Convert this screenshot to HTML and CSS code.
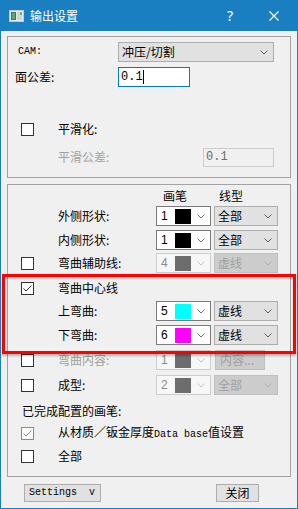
FILE: index.html
```html
<!DOCTYPE html>
<html>
<head>
<meta charset="utf-8">
<title>输出设置</title>
<link rel="stylesheet" href="styles.css">
</head>
<body>
<div class="window">
  <div class="titlebar">
    <svg class="app-icon" width="15" height="12" viewBox="0 0 15 12">
      <rect x="0.5" y="0.5" width="14" height="11" fill="#e8e8e8" stroke="#c8c8c8"/>
      <rect x="2" y="2" width="5" height="8" fill="#3d7a62"/>
      <rect x="3" y="3" width="3" height="6" fill="#5fa07e"/>
      <rect x="8" y="2" width="5" height="8" fill="#cfd6d2"/>
      <rect x="11" y="2" width="2" height="3" fill="#6fb08a"/>
    </svg>
    <span class="title">输出设置</span>
    <span class="help">?</span>
    <svg class="close" width="10" height="10" viewBox="0 0 10 10"><path d="M0.5 0.5L9.5 9.5M9.5 0.5L0.5 9.5" stroke="#fff" stroke-width="1.1" fill="none"/></svg>
  </div>

  <div class="client">
    <div class="group g1">
      <div class="row r-cam">
        <span class="lcell cam">CAM:</span>
        <div class="combo cam-combo"><span class="ctext">冲压/切割</span><svg class="chev" width="8" height="5" viewBox="0 0 8 5"><path d="M0.5 0.5L4 4L7.5 0.5" fill="none" stroke="currentColor"/></svg></div>
      </div>
      <div class="row r-tol">
        <span class="lcell tol">面公差:</span>
        <div class="edit focus"><span class="num">0.1</span><span class="caret"></span></div>
      </div>
      <div class="row r-smooth">
        <span class="cb"></span>
        <span class="clabel">平滑化:</span>
      </div>
      <div class="row r-stol">
        <span class="slabel dis">平滑公差:</span>
        <div class="edit disabled"><span class="num">0.1</span></div>
      </div>
    </div>

    <div class="group g2">
      <div class="row hdr">
        <span class="h-pen">画笔</span>
        <span class="h-line">线型</span>
      </div>

      <div class="row m1">
        <span class="slot"></span>
        <span class="lbl">外侧形状:</span>
        <div class="pen"><span class="pnum">1</span><span class="sw" style="background:#000000"></span><svg class="chev" width="8" height="5" viewBox="0 0 8 5"><path d="M0.5 0.5L4 4L7.5 0.5" fill="none" stroke="currentColor"/></svg></div>
        <div class="combo line"><span class="ctext">全部</span><svg class="chev" width="8" height="5" viewBox="0 0 8 5"><path d="M0.5 0.5L4 4L7.5 0.5" fill="none" stroke="currentColor"/></svg></div>
      </div>

      <div class="row m2">
        <span class="slot"></span>
        <span class="lbl">内侧形状:</span>
        <div class="pen"><span class="pnum">1</span><span class="sw" style="background:#000000"></span><svg class="chev" width="8" height="5" viewBox="0 0 8 5"><path d="M0.5 0.5L4 4L7.5 0.5" fill="none" stroke="currentColor"/></svg></div>
        <div class="combo line"><span class="ctext">全部</span><svg class="chev" width="8" height="5" viewBox="0 0 8 5"><path d="M0.5 0.5L4 4L7.5 0.5" fill="none" stroke="currentColor"/></svg></div>
      </div>

      <div class="row m3">
        <span class="slot"><span class="cb"></span></span>
        <span class="lbl">弯曲辅助线:</span>
        <div class="pen off"><span class="pnum">4</span><span class="sw" style="background:#6d6d6d"></span><svg class="chev" width="8" height="5" viewBox="0 0 8 5"><path d="M0.5 0.5L4 4L7.5 0.5" fill="none" stroke="currentColor"/></svg></div>
        <div class="combo line off"><span class="ctext">虚线</span><svg class="chev" width="8" height="5" viewBox="0 0 8 5"><path d="M0.5 0.5L4 4L7.5 0.5" fill="none" stroke="currentColor"/></svg></div>
      </div>

      <div class="row m4">
        <span class="slot"><span class="cb checked"><svg width="11" height="11" viewBox="0 0 11 11"><path d="M1.5 5.5L4 8L9.5 2.5" fill="none" stroke="#333" stroke-width="1"/></svg></span></span>
        <span class="lbl">弯曲中心线</span>
      </div>

      <div class="row m5">
        <span class="slot"></span>
        <span class="lbl">上弯曲:</span>
        <div class="pen"><span class="pnum">5</span><span class="sw" style="background:#00ffff"></span><svg class="chev" width="8" height="5" viewBox="0 0 8 5"><path d="M0.5 0.5L4 4L7.5 0.5" fill="none" stroke="currentColor"/></svg></div>
        <div class="combo line"><span class="ctext">虚线</span><svg class="chev" width="8" height="5" viewBox="0 0 8 5"><path d="M0.5 0.5L4 4L7.5 0.5" fill="none" stroke="currentColor"/></svg></div>
      </div>

      <div class="row m6">
        <span class="slot"></span>
        <span class="lbl">下弯曲:</span>
        <div class="pen"><span class="pnum">6</span><span class="sw" style="background:#ff00ff"></span><svg class="chev" width="8" height="5" viewBox="0 0 8 5"><path d="M0.5 0.5L4 4L7.5 0.5" fill="none" stroke="currentColor"/></svg></div>
        <div class="combo line"><span class="ctext">虚线</span><svg class="chev" width="8" height="5" viewBox="0 0 8 5"><path d="M0.5 0.5L4 4L7.5 0.5" fill="none" stroke="currentColor"/></svg></div>
      </div>

      <div class="row m7">
        <span class="slot"><span class="cb"></span></span>
        <span class="lbl dis">弯曲内容:</span>
        <div class="pen off"><span class="pnum">1</span><span class="sw" style="background:#6d6d6d"></span><svg class="chev" width="8" height="5" viewBox="0 0 8 5"><path d="M0.5 0.5L4 4L7.5 0.5" fill="none" stroke="currentColor"/></svg></div>
        <div class="btn-content">内容...</div>
      </div>

      <div class="row m8">
        <span class="slot"><span class="cb"></span></span>
        <span class="lbl">成型:</span>
        <div class="pen off"><span class="pnum">2</span><span class="sw" style="background:#6d6d6d"></span><svg class="chev" width="8" height="5" viewBox="0 0 8 5"><path d="M0.5 0.5L4 4L7.5 0.5" fill="none" stroke="currentColor"/></svg></div>
        <div class="combo line off"><span class="ctext">全部</span><svg class="chev" width="8" height="5" viewBox="0 0 8 5"><path d="M0.5 0.5L4 4L7.5 0.5" fill="none" stroke="currentColor"/></svg></div>
      </div>

      <div class="row m9">
        <span class="done">已完成配置的画笔:</span>
      </div>

      <div class="row m10">
        <span class="slot"><span class="cb checked grey"><svg width="11" height="11" viewBox="0 0 11 11"><path d="M1.5 5.5L4 8L9.5 2.5" fill="none" stroke="#8a8a8a" stroke-width="1"/></svg></span></span>
        <span class="lbl wide">从材质／钣金厚度<span class="lat">Data base</span>值设置</span>
      </div>

      <div class="row m11">
        <span class="slot"><span class="cb"></span></span>
        <span class="lbl">全部</span>
      </div>
    </div>

    <div class="buttons">
      <div class="btn settings">Settings  v</div>
      <div class="btn close-btn">关闭</div>
    </div>
  </div>

  <div class="annot"></div>
</div>
</body>
</html>
```

FILE: styles.css
```css
html, body {
  margin: 0;
  padding: 0;
}
body {
  width: 298px;
  height: 509px;
  overflow: hidden;
  font-family: "Noto Sans CJK SC", "Noto Sans", sans-serif;
  font-size: 12px;
  color: #000;
  background: #f0f0f0;
}
.window {
  position: relative;
  width: 298px;
  height: 509px;
}
.titlebar {
  height: 31px;
  background: #1a7fc1;
  display: flex;
  align-items: center;
  color: #fff;
}
.app-icon {
  margin-left: 9px;
  flex: none;
}
.title {
  margin-left: 6px;
  flex: 1;
  font-size: 12px;
  line-height: 16px;
}
.help {
  font-family: "Noto Sans", sans-serif;
  font-size: 14px;
  line-height: 16px;
  margin-right: 36px;
}
.close {
  margin-right: 19px;
  flex: none;
}
.client {
  height: 478px;
  box-sizing: border-box;
  border: 1px solid #1a7fc1;
  border-top: none;
  padding-top: 5px;
  padding-left: 6px;
}
.group {
  width: 284px;
  box-sizing: border-box;
  border: 1px solid #a3a3a3;
  display: flex;
  flex-direction: column;
}
.g1 { height: 142px; }
.g2 { height: 293px; margin-top: 6px; }

.row {
  display: flex;
  align-items: center;
  height: 20px;
  flex: none;
  line-height: 20px;
  white-space: nowrap;
}

/* group 1 */
.r-cam { margin-top: 5px; }
.r-tol { margin-top: 5px; }
.r-smooth { margin-top: 32px; }
.r-stol { margin-top: 8px; }
.lcell { width: 110px; box-sizing: border-box; }
.lcell.cam {
  padding-left: 10px;
  font-family: "Liberation Mono", monospace;
  font-size: 10px;
}
.lcell.tol { padding-left: 7px; }
.r-smooth .cb { margin-left: 13px; }
.clabel { margin-left: 24px; }
.slabel { width: 195px; box-sizing: border-box; padding-left: 50px; }
.dis { color: #a0a0a0; }

.combo {
  height: 20px;
  box-sizing: border-box;
  background: #e1e1e1;
  border: 1px solid #adadad;
  display: flex;
  align-items: center;
  color: #606060;
}
.combo .ctext {
  color: #000;
  padding-left: 3px;
  flex: 1;
}
.combo .chev { margin-right: 5px; }
.cam-combo { width: 156px; }

.edit {
  height: 20px;
  box-sizing: border-box;
  background: #fff;
  display: flex;
  align-items: center;
}
.edit .num {
  font-family: "Liberation Mono", monospace;
  font-size: 12px;
  padding-left: 2px;
}
.edit.focus {
  width: 72px;
  border: 1px solid #0078d7;
}
.caret {
  width: 1px;
  height: 14px;
  background: #000;
  margin-left: 0;
}
.edit.disabled {
  width: 71px;
  height: 19px;
  border: 1px solid #cccccc;
  background: #f0f0f0;
  color: #6d6d6d;
}

/* checkbox */
.cb {
  width: 13px;
  height: 13px;
  box-sizing: border-box;
  border: 1px solid #333;
  background: #fff;
  display: flex;
  align-items: center;
  justify-content: center;
  flex: none;
}
.cb.grey { border-color: #8a8a8a; }

/* group 2 */
.hdr { height: 18px; line-height: 18px; margin-top: 2px; }
.h-pen { margin-left: 155px; }
.h-line { margin-left: 32px; }
.m1 { margin-top: 1px; }
.m2 { margin-top: 4px; }
.m3 { margin-top: 3px; }
.m4 { margin-top: 5px; }
.m5 { margin-top: 3px; }
.m6 { margin-top: 4px; }
.m7 { margin-top: 5px; }
.m8 { margin-top: 5px; }
.m9 { margin-top: 6px; }
.m10 { margin-top: 2px; }
.m11 { margin-top: 3px; }

.slot {
  width: 13px;
  height: 13px;
  margin-left: 13px;
  flex: none;
}
.lbl {
  width: 98px;
  margin-left: 24px;
  flex: none;
}
.lbl.wide { width: auto; }
.lat {
  font-family: "Liberation Mono", monospace;
  font-size: 10px;
}
.done { margin-left: 14px; }

.pen {
  width: 55px;
  height: 20px;
  box-sizing: border-box;
  border: 1px solid #7a7a7a;
  background: #fff;
  display: flex;
  align-items: center;
  color: #707070;
  flex: none;
}
.pnum {
  width: 18px;
  box-sizing: border-box;
  padding-left: 4px;
  color: #000;
  font-family: "Liberation Sans", sans-serif;
  font-size: 12px;
}
.sw {
  width: 16px;
  height: 15px;
  flex: none;
}
.pen .chev { margin-left: 6px; }
.pen.off {
  border-color: #cccccc;
  background: #f7f7f7;
  color: #c4c4c4;
}
.pen.off .pnum { color: #8a8a8a; }

.line {
  width: 64px;
  margin-left: 3px;
  flex: none;
}
.line.off {
  background: #cccccc;
  border-color: #bfbfbf;
  color: #b0b0b0;
}
.line.off .ctext { color: #a0a0a0; }

.btn-content {
  width: 50px;
  height: 20px;
  box-sizing: border-box;
  margin-left: 4px;
  background: #cccccc;
  border: 1px solid #bfbfbf;
  color: #a0a0a0;
  padding-left: 4px;
  line-height: 18px;
}

/* buttons */
.buttons {
  display: flex;
  align-items: center;
  margin-top: 7px;
  height: 18px;
}
.btn {
  height: 18px;
  box-sizing: border-box;
  background: #e1e1e1;
  border: 1px solid #adadad;
  line-height: 16px;
}
.settings {
  width: 77px;
  margin-left: 17px;
  padding-left: 4px;
  font-family: "Liberation Mono", monospace;
  font-size: 10px;
  white-space: pre;
}
.close-btn {
  width: 43px;
  margin-left: 115px;
  text-align: center;
}

/* red annotation overlay */
.annot {
  position: absolute;
  left: 2px;
  top: 274px;
  width: 294px;
  height: 80px;
  box-sizing: border-box;
  border: 3px solid #ff0000;
  box-shadow: 0 2px 2px rgba(0, 0, 0, 0.25), inset 0 2px 2px rgba(0, 0, 0, 0.18);
  pointer-events: none;
}
```
